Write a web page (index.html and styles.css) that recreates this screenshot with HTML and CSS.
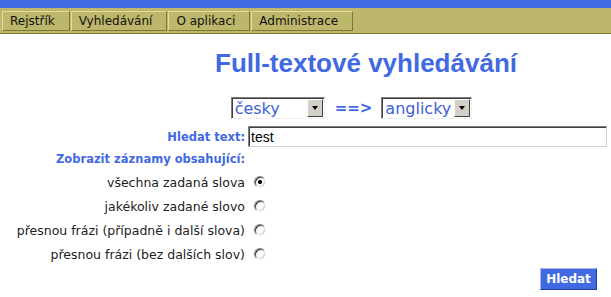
FILE: index.html
```html
<!DOCTYPE html>
<html lang="cs">
<head>
<meta charset="utf-8">
<title>Full-textové vyhledávání</title>
<link rel="stylesheet" href="styles.css">
</head>
<body>
<div class="topbar"></div>
<nav class="nav">
  <a class="tab">Rejstřík</a>
  <a class="tab">Vyhledávání</a>
  <a class="tab">O aplikaci</a>
  <a class="tab">Administrace</a>
</nav>
<main class="main">
  <h1 class="title">Full-textové vyhledávání</h1>
  <div class="langs">
    <span class="sel sel-cs"><select><option>česky</option></select><span class="arrow"><span class="tri"></span></span></span>
    <span class="dir">==&gt;</span>
    <span class="sel sel-en"><select><option>anglicky</option></select><span class="arrow"><span class="tri"></span></span></span>
  </div>
  <form class="form">
    <label class="lbl" for="q">Hledat text:</label>
    <input id="q" class="text" type="text" value="test">
    <div class="lbl">Zobrazit záznamy obsahující:</div>
    <div></div>
    <label class="opt" for="r1">všechna zadaná slova</label>
    <div class="rc"><input id="r1" class="radio" type="radio" name="m" checked></div>
    <label class="opt" for="r2">jakékoliv zadané slovo</label>
    <div class="rc"><input id="r2" class="radio" type="radio" name="m"></div>
    <label class="opt" for="r3">přesnou frázi (případně i další slova)</label>
    <div class="rc"><input id="r3" class="radio" type="radio" name="m"></div>
    <label class="opt" for="r4">přesnou frázi (bez dalších slov)</label>
    <div class="rc"><input id="r4" class="radio" type="radio" name="m"></div>
    <div></div>
    <div class="actions"><button type="button" class="btn">Hledat</button></div>
  </form>
</main>
</body>
</html>
```
FILE: styles.css
```css
body {
  margin: 0;
  background: #fff;
  font-family: "DejaVu Sans", Verdana, sans-serif;
}
.topbar {
  height: 8px;
  background: #4169e1;
}
.nav {
  display: flex;
  gap: 1px;
  padding: 3px 2px 2px;
  background: #bdb76b;
  border-bottom: 1px solid #7d7736;
}
.tab {
  box-sizing: border-box;
  height: 20px;
  padding: 0 14px 0 7px;
  border: 1px solid;
  border-color: #e2dda2 #7d7736 #7d7736 #e2dda2;
  font-size: 12px;
  line-height: 18px;
  color: #111;
}
.title {
  margin: 14px 0 0;
  padding-left: 121px;
  text-align: center;
  font-family: "Liberation Sans", Arial, sans-serif;
  font-size: 26px;
  line-height: 30px;
  font-weight: bold;
  color: #4169e1;
}
.langs {
  margin-top: 19px;
  padding-left: 92px;
  display: flex;
  justify-content: center;
  align-items: center;
  gap: 7px;
}
.sel {
  box-sizing: border-box;
  display: inline-flex;
  align-items: center;
  height: 22px;
  border: 1px solid;
  border-color: #7f7f7f #f0f0f0 #f0f0f0 #7f7f7f;
  box-shadow: inset 1px 1px 0 #404040;
  background: #fff;
}
.sel-cs { width: 94px; }
.sel-en { width: 91px; }
.sel select {
  appearance: none;
  -webkit-appearance: none;
  flex: 1;
  min-width: 0;
  border: 0;
  background: transparent;
  font-family: "DejaVu Sans", Verdana, sans-serif;
  font-size: 16px;
  color: #3d62d8;
  padding: 0 0 0 3px;
  margin: 0;
  height: 20px;
  outline: none;
}
.arrow {
  box-sizing: border-box;
  width: 16px;
  height: 18px;
  margin-right: 1px;
  background: #d4d0c8;
  border: 1px solid;
  border-color: #fff #404040 #404040 #fff;
  display: flex;
  align-items: center;
  justify-content: center;
}
.tri {
  width: 0;
  height: 0;
  border-top: 4px solid #000;
  border-left: 3.5px solid transparent;
  border-right: 3.5px solid transparent;
}
.dir {
  font-size: 15px;
  font-weight: bold;
  color: #4169e1;
  margin: 0 2px 0 3px;
}
.form {
  margin: 7px 4px 0 0;
  display: grid;
  grid-template-columns: 245px 1fr;
  column-gap: 3px;
  grid-auto-rows: 24px;
  grid-template-rows: 21px 23px;
}
.lbl {
  text-align: right;
  font-size: 11.5px;
  font-weight: bold;
  color: #4169e1;
  align-self: center;
  white-space: nowrap;
}
.text {
  box-sizing: border-box;
  width: 100%;
  height: 21px;
  margin: 0;
  padding: 0 2px;
  border: 1px solid;
  border-color: #7f7f7f #d4d0c8 #d4d0c8 #7f7f7f;
  box-shadow: inset 1px 1px 0 #404040;
  font-family: "Liberation Sans", Arial, sans-serif;
  font-size: 14px;
  color: #000;
  outline: none;
}
.opt {
  text-align: right;
  align-self: center;
  font-size: 12.5px;
  color: #222;
  white-space: nowrap;
}
.rc {
  display: flex;
  align-items: center;
}
.radio {
  appearance: none;
  -webkit-appearance: none;
  box-sizing: border-box;
  width: 12px;
  height: 12px;
  margin: 0 0 0 6px;
  border-radius: 50%;
  border: 1px solid;
  border-color: #808080 #f4f4f4 #f4f4f4 #808080;
  box-shadow: inset 1px 1px 0 #404040, inset -1px -1px 0 #d4d0c8;
  background: #fff;
}
.radio:checked {
  background: radial-gradient(circle, #000 0 1.8px, #fff 2.3px);
}
.actions {
  display: flex;
  justify-content: flex-end;
  align-items: flex-end;
  padding-right: 10px;
}
.btn {
  box-sizing: border-box;
  width: 57px;
  height: 22px;
  margin: 1px 0 0;
  padding: 0;
  border: 1px solid;
  border-color: #a8b8f0 #1f3b9a #1f3b9a #a8b8f0;
  background: #4169e1;
  color: #fff;
  font-family: "DejaVu Sans", Verdana, sans-serif;
  font-size: 12px;
  font-weight: bold;
}
```
